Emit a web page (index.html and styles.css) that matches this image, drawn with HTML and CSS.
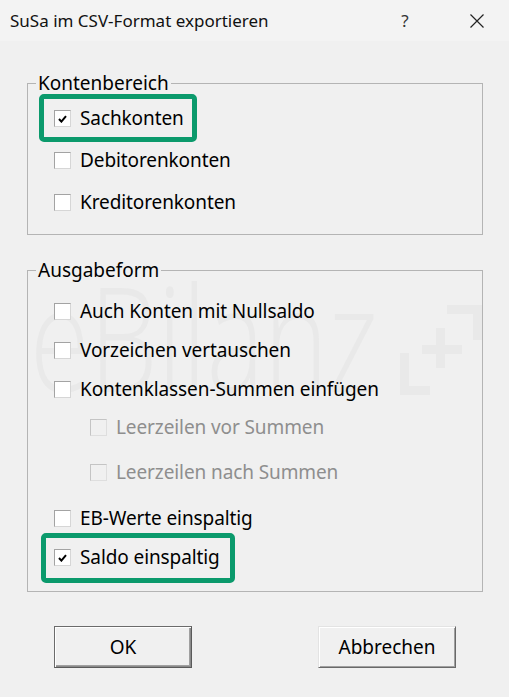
FILE: index.html
```html
<!DOCTYPE html>
<html lang="de">
<head>
<meta charset="utf-8">
<title>SuSa im CSV-Format exportieren</title>
<link rel="stylesheet" href="styles.css">
</head>
<body>
<div class="window">
  <svg class="watermark" viewBox="28 270 454 130" width="454" height="130" aria-hidden="true">
    <text x="30" y="392" class="wm-text" textLength="348" lengthAdjust="spacingAndGlyphs">eBilanz</text>
    <rect x="422" y="345" width="40" height="9"/>
    <rect x="436" y="328" width="9" height="40"/>
    <rect x="400" y="353" width="9" height="42"/>
    <rect x="400" y="386" width="30" height="9"/>
    <rect x="447" y="305" width="35" height="9"/>
    <rect x="473" y="305" width="9" height="35"/>
  </svg>

  <div class="titlebar">
    <span class="title">SuSa im CSV-Format exportieren</span>
    <span class="help">?</span>
    <svg class="close" width="16" height="14" viewBox="0 0 16 14"><path d="M1.5 0.5 L14.5 13.5 M14.5 0.5 L1.5 13.5" stroke="#222" stroke-width="1.2" fill="none"/></svg>
  </div>

  <fieldset class="group g1">
    <legend>Kontenbereich</legend>
    <div class="row r42">
      <span class="cb"><svg class="tick" width="9" height="8" viewBox="0 0 9 8"><path d="M1 4 L3.4 6.6 L8 1.2" stroke="#000" stroke-width="2" fill="none"/></svg></span>
      <span class="lbl">Sachkonten</span>
      <span class="hl hl1"></span>
    </div>
    <div class="row r42"><span class="cb"></span><span class="lbl">Debitorenkonten</span></div>
    <div class="row r42"><span class="cb"></span><span class="lbl">Kreditorenkonten</span></div>
  </fieldset>

  <fieldset class="group g2">
    <legend>Ausgabeform</legend>
    <div class="row"><span class="cb"></span><span class="lbl">Auch Konten mit Nullsaldo</span></div>
    <div class="row mt1"><span class="cb"></span><span class="lbl">Vorzeichen vertauschen</span></div>
    <div class="row mt1"><span class="cb"></span><span class="lbl">Kontenklassen-Summen einfügen</span></div>
    <div class="row dis"><span class="cb"></span><span class="lbl">Leerzeilen vor Summen</span></div>
    <div class="row dis mt7"><span class="cb"></span><span class="lbl">Leerzeilen nach Summen</span></div>
    <div class="row mt8"><span class="cb"></span><span class="lbl">EB-Werte einspaltig</span></div>
    <div class="row mt1">
      <span class="cb"><svg class="tick" width="9" height="8" viewBox="0 0 9 8"><path d="M1 4 L3.4 6.6 L8 1.2" stroke="#000" stroke-width="2" fill="none"/></svg></span>
      <span class="lbl">Saldo einspaltig</span>
      <span class="hl hl2"></span>
    </div>
  </fieldset>

  <div class="buttons">
    <button class="btn default" type="button">OK</button>
    <button class="btn" type="button">Abbrechen</button>
  </div>
</div>
</body>
</html>
```
FILE: styles.css
```css
html, body {
  margin: 0;
  padding: 0;
  background: #f0f0f0;
}
body {
  font-family: "Noto Sans", "DejaVu Sans", sans-serif;
  color: #000;
}
.window {
  position: relative;
  z-index: 0;
  width: 509px;
  height: 697px;
  overflow: hidden;
}
.watermark {
  position: absolute;
  left: 28px;
  top: 270px;
  z-index: -1;
  fill: #e9e9e9;
}
.wm-text {
  font-family: "Open Sans", sans-serif;
  font-weight: 300;
  font-size: 145px;
}
.titlebar {
  height: 41px;
  display: flex;
  align-items: center;
  background: #f3f3f3;
}
.title {
  flex: 1;
  margin-left: 10px;
  font-size: 17px;
  color: #111;
  white-space: nowrap;
}
.help {
  width: 8px;
  margin-right: 60px;
  text-align: center;
  font-size: 17px;
  color: #333;
}
.close {
  margin-right: 24px;
  display: block;
}
.group {
  box-sizing: border-box;
  width: 456px;
  margin: 0 0 0 27px;
  padding: 0;
  min-width: 0;
  border: 1px solid #b4b4b4;
}
.group legend {
  margin-left: 8px;
  padding: 0 2px;
  font-size: 19px;
  line-height: 22px;
}
.g1 {
  margin-top: 31px;
  padding: 3px 0 11px 0;
}
.g2 {
  margin-top: 24px;
  padding: 11px 0 15px 0;
}
.row {
  position: relative;
  display: flex;
  align-items: center;
  height: 38px;
  margin-left: 26px;
  font-size: 19px;
  letter-spacing: -0.1px;
  white-space: nowrap;
}
.row.r42 { height: 42px; }
.mt1 { margin-top: 1px; }
.mt7 { margin-top: 7px; }
.mt8 { margin-top: 8px; }
.cb {
  box-sizing: border-box;
  width: 17px;
  height: 17px;
  flex: none;
  margin-right: 9px;
  background: #fff;
  border: 1px solid;
  border-color: #a3a3a3 #d6d6d6 #d6d6d6 #a3a3a3;
  display: flex;
  align-items: center;
  justify-content: center;
}
.tick { display: block; margin-top: 1px; }
.row.dis { margin-left: 62px; }
.row.dis .cb {
  background: #f0f0f0;
  border-color: #c4c4c4 #dedede #dedede #c4c4c4;
}
.row.dis .lbl { color: #8e8e8e; }
.hl {
  position: absolute;
  box-sizing: border-box;
  border: 5px solid #0b9a6c;
  border-radius: 5px;
  pointer-events: none;
}
.hl1 { left: -15px; top: -3px; width: 158px; height: 48px; }
.hl2 { left: -13px; top: -5px; width: 194px; height: 50px; }
.buttons {
  display: flex;
  gap: 126px;
  margin: 34px 0 0 54px;
}
.btn {
  box-sizing: border-box;
  width: 138px;
  height: 42px;
  padding: 0;
  font-family: "Noto Sans", "DejaVu Sans", sans-serif;
  font-size: 19px;
  color: #000;
  background: #f0f0f0;
  border: 1px solid;
  border-color: #e3e3e3 #696969 #696969 #e3e3e3;
  box-shadow: inset 1px 1px #fff, inset -1px -1px #a0a0a0;
}
.btn.default {
  border-color: #6b6b6b #5a5a5a #5a5a5a #6b6b6b;
  box-shadow: inset 1px 1px #fff, inset -1px -1px #8a8a8a, inset -2px -2px #a0a0a0;
}
```
